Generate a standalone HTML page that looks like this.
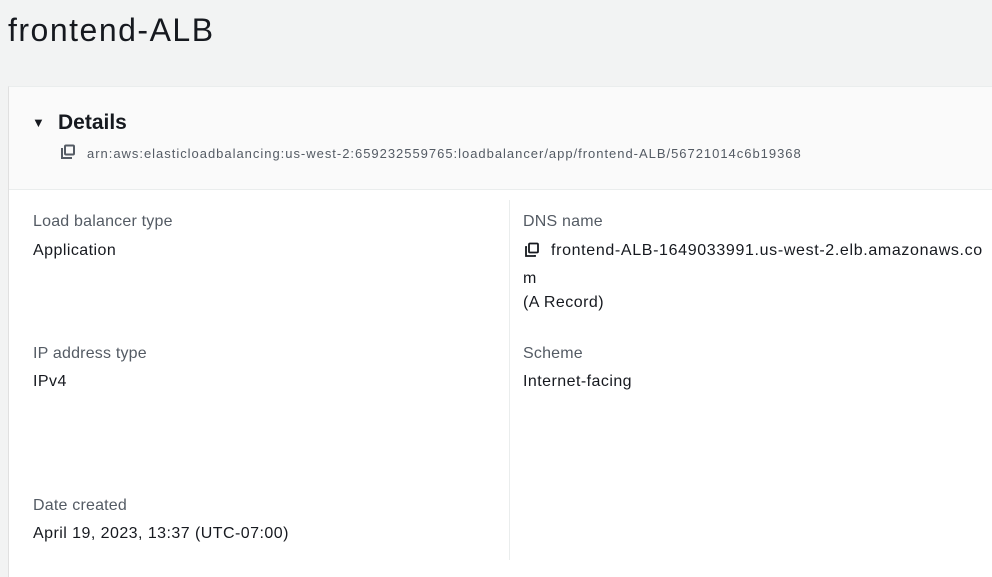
<!DOCTYPE html>
<html><head><style>
body{margin:0;width:992px;height:568px;overflow:hidden;background:#f2f3f3;font-family:"Liberation Sans",sans-serif;color:#16191f;position:relative}
.t{position:absolute;white-space:nowrap}
.panel{position:absolute;left:8px;top:86px;width:990px;height:490px;background:#fff;border-left:1px solid #e0e0e0;border-top:1px solid #eaeded}
.hdr{position:absolute;left:9px;top:87px;width:983px;height:102px;background:#fafafa;border-bottom:1px solid #eaeded}
.lab{font-size:16px;color:#545b64;letter-spacing:0.2px}
.val{font-size:16px;color:#16191f;letter-spacing:0.45px}
.div{position:absolute;left:509px;top:200px;width:1px;height:360px;background:#eaeded}
</style></head><body>
<div class="t" style="left:8px;top:12px;font-size:32px;letter-spacing:1.5px;color:#16191f">frontend-ALB</div>
<div class="panel"></div>
<div class="hdr"></div>
<div class="t" style="left:32px;top:115px;font-size:13px">&#9660;</div>
<div class="t" style="left:58px;top:111px;font-size:21px;font-weight:bold">Details</div>
<svg class="t" style="left:60px;top:144px" width="16" height="16" viewBox="0 0 16 16"><rect x="5" y="1.5" width="9" height="9" rx="1" fill="none" stroke="#545b64" stroke-width="2"/><path d="M3 5H2v9h9v-1" fill="none" stroke="#545b64" stroke-width="2"/></svg>
<div class="t" style="left:87px;top:146px;font-size:13px;letter-spacing:0.98px;color:#545b64">arn:aws:elasticloadbalancing:us-west-2:659232559765:loadbalancer/app/frontend-ALB/56721014c6b19368</div>
<div class="div"></div>
<div class="t lab" style="left:33px;top:213px">Load balancer type</div>
<div class="t val" style="left:33px;top:242px">Application</div>
<div class="t lab" style="left:523px;top:213px">DNS name</div>
<svg class="t" style="left:524px;top:242px" width="16" height="16" viewBox="0 0 16 16"><rect x="5" y="1.5" width="9" height="9" rx="1" fill="none" stroke="#16191f" stroke-width="1.8"/><path d="M3 5H2v9h9v-1" fill="none" stroke="#16191f" stroke-width="1.8"/></svg>
<div class="t val" style="left:551px;top:242px;letter-spacing:0.65px">frontend-ALB-1649033991.us-west-2.elb.amazonaws.co</div>
<div class="t val" style="left:523px;top:270px">m</div>
<div class="t val" style="left:523px;top:294px">(A Record)</div>
<div class="t lab" style="left:33px;top:345px">IP address type</div>
<div class="t val" style="left:33px;top:373px">IPv4</div>
<div class="t lab" style="left:523px;top:345px">Scheme</div>
<div class="t val" style="left:523px;top:373px">Internet-facing</div>
<div class="t lab" style="left:33px;top:497px">Date created</div>
<div class="t val" style="left:33px;top:525px">April 19, 2023, 13:37 (UTC-07:00)</div>
</body></html>
